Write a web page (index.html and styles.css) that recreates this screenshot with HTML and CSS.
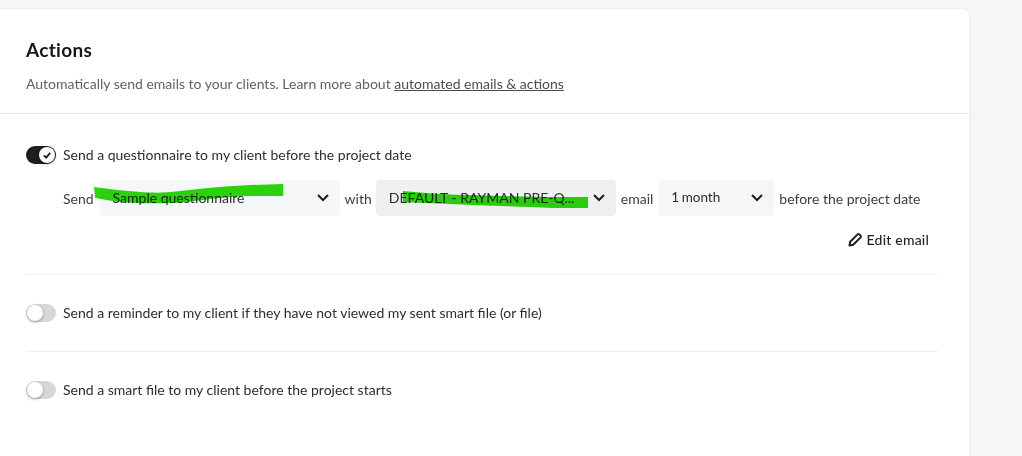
FILE: index.html
```html
<!DOCTYPE html>
<html lang="en">
<head>
<meta charset="utf-8">
<title>Actions</title>
<link rel="stylesheet" href="styles.css">
</head>
<body>
<main class="card">
  <header class="card-head">
    <h1 class="title">Actions</h1>
    <p class="sub">Automatically send emails to your clients. Learn more about <a class="link" href="#">automated emails &amp; actions</a></p>
  </header>
  <section class="list">
    <div class="item item-first">
      <div class="toggle-row">
        <span class="toggle on"><span class="knob"><svg viewBox="0 0 12 12" width="12" height="12"><path d="M2.8 6.4 5.1 8.6 9.2 3.8" fill="none" stroke="#1c1e20" stroke-width="1.8"/></svg></span></span>
        <span class="label">Send a questionnaire to my client before the project date</span>
      </div>
      <div class="config">
        <span class="word">Send</span>
        <span class="select s1"><span class="val">Sample questionnaire</span><svg class="chev" viewBox="0 0 14 9" width="14" height="9"><path d="M2 2 7 7 12 2" fill="none" stroke="#1c1e20" stroke-width="2"/></svg></span>
        <span class="word">with</span>
        <span class="select s2"><span class="val">DEFAULT - RAYMAN PRE-Q...</span><svg class="chev" viewBox="0 0 14 9" width="14" height="9"><path d="M2 2 7 7 12 2" fill="none" stroke="#1c1e20" stroke-width="2"/></svg></span>
        <span class="word">email</span>
        <span class="select s3"><span class="val">1 month</span><svg class="chev" viewBox="0 0 14 9" width="14" height="9"><path d="M2 2 7 7 12 2" fill="none" stroke="#1c1e20" stroke-width="2"/></svg></span>
        <span class="word">before the project date</span>
        <svg class="scribble" viewBox="0 0 1022 456" width="1022" height="456"><path d="M94 187 C110 189 125 191 140 192 C155 193 165 193 180 191 C205 188 230 186 250 185 L283 184 L283 196 L250 196 C235 196 222 198 210 199 C195 201 180 203 167 203 C145 204 120 203 95 198 Z" fill="#2ed90e"/><path d="M403 191 C425 193 450 195 473 195 C500 196 530 197 553 197 L588 197 L588 208 L553 208 C530 207 500 206 473 205 C450 204 425 203 403 202 Z" fill="#2ed90e"/></svg>
      </div>
      <div class="edit-row">
        <a class="edit" href="#"><svg viewBox="0 0 16 16" width="16" height="16"><path d="M2.5 13.5 3.2 9.8 10.6 2.4a1.3 1.3 0 0 1 1.8 0l1.2 1.2a1.3 1.3 0 0 1 0 1.8L6.2 12.8Z" fill="none" stroke="#1c1e20" stroke-width="2" stroke-linejoin="round"/></svg>Edit email</a>
      </div>
    </div>
    <div class="item">
      <div class="toggle-row">
        <span class="toggle"><span class="knob"></span></span>
        <span class="label">Send a reminder to my client if they have not viewed my sent smart file (or file)</span>
      </div>
    </div>
    <div class="item">
      <div class="toggle-row">
        <span class="toggle"><span class="knob"></span></span>
        <span class="label">Send a smart file to my client before the project starts</span>
      </div>
    </div>
  </section>
</main>
</body>
</html>
```

FILE: styles.css
```css
* { box-sizing: border-box; }
html, body { height: 100%; }
body {
  margin: 0;
  background: #f6f6f6;
  font-family: "Lato", "Liberation Sans", sans-serif;
  color: #2b2d30;
  overflow: hidden;
  padding-top: 9px;
}
.card {
  width: 969px;
  height: 460px;
  background: #fff;
  border-radius: 0 6px 0 0;
  box-shadow: 0 0 3px rgba(0,0,0,.1);
}
.card-head {
  height: 105px;
  padding: 30px 26px 0;
  border-bottom: 1px solid #ebebeb;
}
.title {
  margin: 0;
  font-size: 19px;
  line-height: 22px;
  font-weight: 700;
  letter-spacing: .3px;
  color: #17181a;
}
.sub {
  margin: 14px 0 0;
  font-size: 14px;
  line-height: 18px;
  color: #606265;
}
.link { color: #4a4c4f; text-decoration: underline; }
.list { padding: 0 31px 0 26px; }
.item { padding: 28px 0 28px; border-bottom: 1px solid #eeeeee; }
.item:last-child { border-bottom: 0; }
.item-first { padding: 31px 0 25px; height: 161px; }
.toggle-row { display: flex; align-items: center; gap: 7px; height: 20px; }
.toggle {
  width: 30px; height: 18px;
  border-radius: 9px;
  background: #d6d7da;
  display: flex; align-items: center;
  padding: 1px;
}
.toggle.on { background: #1c1e20; justify-content: flex-end; }
.knob {
  width: 16px; height: 16px;
  border-radius: 50%;
  background: #fff;
  box-shadow: 0 1px 3px rgba(0,0,0,.35);
  display: flex; align-items: center; justify-content: center;
}
.label { font-size: 14px; line-height: 18px; color: #2b2d30; }
.config {
  display: flex; align-items: center;
  margin: 15px 0 0 37px;
  height: 36px;
  gap: 5px;
  position: relative;
}
.word { font-size: 14px; color: #3c3e41; padding-top: 1px; }
.select {
  height: 36px;
  border-radius: 4px;
  background: #f4f6f7;
  display: flex; align-items: center; justify-content: space-between;
  padding: 0 10px 2px 13px;
  font-size: 14px;
  color: #2b2d30;
}
.s1 { width: 240px; margin-left: 1px; }
.s2 { width: 240px; margin-left: -1px; background: #eff0f1; }
.s3 { width: 115px; margin-left: 1px; padding-left: 12px; font-size: 13.5px; word-spacing: -1px; }
.chev { flex: none; }
.scribble { position: absolute; left: -63px; top: -180px; pointer-events: none; mix-blend-mode: multiply; }
.edit-row { display: flex; justify-content: flex-end; padding: 15px 9px 0 0; }
.edit {
  display: flex; align-items: center; gap: 4px;
  font-size: 14px; font-weight: 500;
  letter-spacing: .2px;
  color: #1c1e20; text-decoration: none;
}
```
